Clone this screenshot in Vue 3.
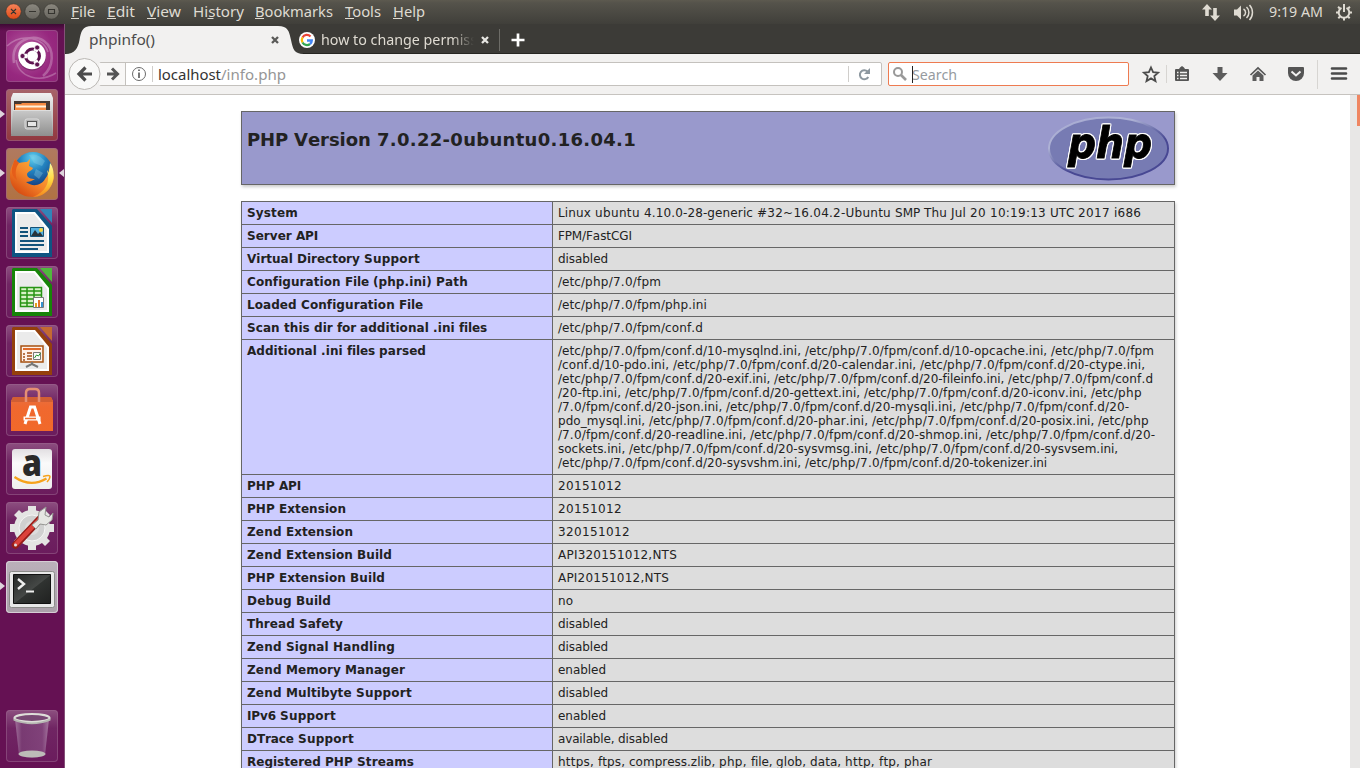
<script setup>
const menus = [
  ['File', 71, 24.5], ['Edit', 107, 28], ['View', 147, 34], ['History', 193, 51],
  ['Bookmarks', 255, 78], ['Tools', 345, 36], ['Help', 393, 32],
]
const rows = [
  ['System', 'Linux ubuntu 4.10.0-28-generic #32~16.04.2-Ubuntu SMP Thu Jul 20 10:19:13 UTC 2017 i686'],
  ['Server API', 'FPM/FastCGI'],
  ['Virtual Directory Support', 'disabled'],
  ['Configuration File (php.ini) Path', '/etc/php/7.0/fpm'],
  ['Loaded Configuration File', '/etc/php/7.0/fpm/php.ini'],
  ['Scan this dir for additional .ini files', '/etc/php/7.0/fpm/conf.d'],
  ['Additional .ini files parsed', `/etc/php/7.0/fpm/conf.d/10-mysqlnd.ini, /etc/php/7.0/fpm/conf.d/10-opcache.ini, /etc/php/7.0/fpm
/conf.d/10-pdo.ini, /etc/php/7.0/fpm/conf.d/20-calendar.ini, /etc/php/7.0/fpm/conf.d/20-ctype.ini,
/etc/php/7.0/fpm/conf.d/20-exif.ini, /etc/php/7.0/fpm/conf.d/20-fileinfo.ini, /etc/php/7.0/fpm/conf.d
/20-ftp.ini, /etc/php/7.0/fpm/conf.d/20-gettext.ini, /etc/php/7.0/fpm/conf.d/20-iconv.ini, /etc/php
/7.0/fpm/conf.d/20-json.ini, /etc/php/7.0/fpm/conf.d/20-mysqli.ini, /etc/php/7.0/fpm/conf.d/20-
pdo_mysql.ini, /etc/php/7.0/fpm/conf.d/20-phar.ini, /etc/php/7.0/fpm/conf.d/20-posix.ini, /etc/php
/7.0/fpm/conf.d/20-readline.ini, /etc/php/7.0/fpm/conf.d/20-shmop.ini, /etc/php/7.0/fpm/conf.d/20-
sockets.ini, /etc/php/7.0/fpm/conf.d/20-sysvmsg.ini, /etc/php/7.0/fpm/conf.d/20-sysvsem.ini,
/etc/php/7.0/fpm/conf.d/20-sysvshm.ini, /etc/php/7.0/fpm/conf.d/20-tokenizer.ini`],
  ['PHP API', '20151012'],
  ['PHP Extension', '20151012'],
  ['Zend Extension', '320151012'],
  ['Zend Extension Build', 'API320151012,NTS'],
  ['PHP Extension Build', 'API20151012,NTS'],
  ['Debug Build', 'no'],
  ['Thread Safety', 'disabled'],
  ['Zend Signal Handling', 'disabled'],
  ['Zend Memory Manager', 'enabled'],
  ['Zend Multibyte Support', 'disabled'],
  ['IPv6 Support', 'enabled'],
  ['DTrace Support', 'available, disabled'],
  ['Registered PHP Streams', 'https, ftps, compress.zlib, php, file, glob, data, http, ftp, phar'],
]

// Spaces each run of text so that its characters advance by whole pixels on average.
const ctx = document.createElement('canvas').getContext('2d')
function runs(text, font) {
  ctx.font = font
  return (text.match(/[^\s/]+[ /\n]?|[\s/]/g) || []).map((t) => {
    const chars = [...t].filter((c) => c !== '\n')
    const extra = chars.reduce((sum, c) => {
      const w = ctx.measureText(c).width
      return sum + Math.round(w) - w
    }, 0)
    return { t, style: { letterSpacing: `${(chars.length ? extra / chars.length : 0).toFixed(4)}px` } }
  })
}
const title = runs('PHP Version 7.0.22-0ubuntu0.16.04.1', 'bold 18px "DejaVu Sans"')
const table = rows.map(([k, v]) => ({
  key: runs(k, 'bold 12px "DejaVu Sans"'),
  val: runs(v, '12px "DejaVu Sans"'),
}))
</script>

<template>
  <div class="desktop">
    <header class="panel">
      <svg class="wm" width="65" height="24" viewBox="0 0 65 24">
        <defs>
          <linearGradient id="wc" x1="0" y1="0" x2="0" y2="1"><stop offset="0" stop-color="#f7845a" /><stop offset="1" stop-color="#df4a16" /></linearGradient>
          <linearGradient id="wb" x1="0" y1="0" x2="0" y2="1"><stop offset="0" stop-color="#8b887f" /><stop offset="1" stop-color="#67655e" /></linearGradient>
        </defs>
        <circle cx="13.5" cy="11.5" r="7.7" fill="url(#wc)" stroke="#35342f" stroke-width=".6" />
        <circle cx="32.5" cy="11.5" r="7.7" fill="url(#wb)" stroke="#35342f" stroke-width=".6" />
        <circle cx="51.5" cy="11.5" r="7.7" fill="url(#wb)" stroke="#35342f" stroke-width=".6" />
        <path d="M11 9l5 5M16 9l-5 5M29 11.5h7M48.5 9.5h6v4h-6z" fill="none" stroke="#35342f" stroke-width="1.1" />
      </svg>
      <svg class="menus" width="400" height="24" viewBox="65 0 400 24">
        <g v-for="m in menus" :key="m[0]">
          <text :x="m[1]" y="17" :textLength="m[2]" lengthAdjust="spacingAndGlyphs">{{ m[0] }}</text>
          <path :d="`M${m[1]} 18.5h${m[0] === 'History' ? 0 : m[0] === 'File' ? 8 : 9}`" stroke="#dfdbd2" />
          <path v-if="m[0] === 'History'" d="M207.5 18.5h6" stroke="#dfdbd2" />
        </g>
      </svg>
      <svg class="status" width="170" height="24" viewBox="1190 0 170 24" fill="#dfdbd2">
        <path d="M1207 4l5 5.500h-3.200V16h-3.600V9.500h-3.200zM1215 21l-5-5.500h3.200V8h3.600v7.500h3.200z" />
        <path d="M1234 9.500h3l4-4v14l-4-4h-3z" />
        <path d="M1243.500 9a4 4 0 010 7M1246.500 7a7.500 7.500 0 010 11M1249.500 5a11 11 0 010 15" fill="none" stroke="#dfdbd2" stroke-width="1.500" />
        <text x="1269" y="17" textLength="54" lengthAdjust="spacingAndGlyphs">9:19 AM</text>
        <g fill="none" stroke="#dfdbd2" stroke-width="2">
          <path d="M1341.500 7.800a5.300 5.300 0 105 0M1344 4v8" />
          <path d="M1339.800 8.500l-1.700-1.700M1348.200 8.500l1.700-1.700M1338.500 12.500h-2.500M1349.500 12.500h2.500M1340 16.500l-1.700 1.700M1348 16.500l1.700 1.700M1344 18v2.500" />
        </g>
      </svg>
    </header>

    <div class="body">
      <nav class="launcher">
        <div class="tile dash"><svg viewBox="0 0 52 52">
          <g fill="none" stroke="#fff" opacity=".25"><path d="M8 33C4 10 27 3 38 11S48 37 37 46" stroke-width="2.500" /><path d="M1 16C16 2 38 8 42 22M10 30C13 48 34 53 50 43" stroke-width="1.500" /></g>
          <circle cx="26" cy="26.500" r="14" fill="#5d1650" opacity=".5" /><circle cx="26" cy="25.500" r="13.800" fill="#fff" />
          <circle cx="26.500" cy="26" r="7" fill="none" stroke="#5e1350" stroke-width="3" />
          <path d="M21 26h-4M29.200 21.300l2-3.500M29.200 30.700l2 3.500" stroke="#fff" stroke-width="4.500" />
          <g fill="#5e1350" stroke="#fff" stroke-width=".7"><circle cx="16.500" cy="26" r="2.500" /><circle cx="31.200" cy="17.500" r="2.500" /><circle cx="31.200" cy="34.500" r="2.500" /></g>
        </svg></div>
        <div class="tile files"><i class="run"></i><svg viewBox="0 0 52 52">
          <defs><linearGradient id="met" x1="0" y1="0" x2="0" y2="1"><stop stop-color="#c9c9c9" /><stop offset="1" stop-color="#8f8f8e" /></linearGradient><linearGradient id="cab" x1="0" y1="0" x2="0" y2="1"><stop stop-color="#f0f0f0" /><stop offset="1" stop-color="#aaa" /></linearGradient></defs>
          <path d="M7 4h38l2 5v36H5V9z" fill="url(#cab)" /><path d="M8 12h36v9H8z" fill="#463932" />
          <path d="M9 15l6 0 1-1h24v8H9z" fill="#f68a41" /><path d="M10 16.500h30v2H10z" fill="#fff1db" />
          <path d="M7 21h38l2 26H5z" fill="url(#met)" /><path d="M7 21.500h38" stroke="#ddd" /><rect x="19" y="30" width="14" height="10" rx="2" fill="#b4b4b4" stroke="#dedede" /><rect x="21.500" y="32.500" width="9" height="5" fill="#e6e6e6" stroke="#555" />
        </svg></div>
        <div class="tile firefox"><i class="run"></i><i class="active"></i><svg viewBox="0 0 52 52">
          <defs><radialGradient id="globe" cx=".5" cy=".15" r=".75"><stop stop-color="#5fd0f0" /><stop offset=".45" stop-color="#2382bf" /><stop offset="1" stop-color="#123c80" /></radialGradient><linearGradient id="fox" x1=".8" y1=".1" x2=".1" y2=".9"><stop stop-color="#ffb53b" /><stop offset=".5" stop-color="#f4842a" /><stop offset="1" stop-color="#d3450f" /></linearGradient><linearGradient id="tail" x1="0" y1="0" x2="0" y2="1"><stop stop-color="#fff79c" /><stop offset=".5" stop-color="#ffd940" /><stop offset="1" stop-color="#f3851d" /></linearGradient></defs>
          <circle cx="27" cy="23.500" r="19.500" fill="url(#globe)" />
          <path d="M23 7c7-2 12 2 16 6l-3 5-8-3zM30 21l7 4-4 6-5-4z" fill="#93cde2" opacity=".35" />
          <path d="M9 11c1 2 3 3 4 4 3-1 6-1 8-1l3-3c0 3-1 5-1 7l4 2c-1 3-5 3-6 6 0 4 4 5 8 5-3 2-6 3-9 3 6 5 15 4 19-3 3-4 4-7 4-11 3 4 5 5 5 10-2 10-10 19-21 19C12 49 3 38 4 26c0-6 3-9 5-15z" fill="url(#fox)" />
          <path d="M44 15c5 6 5 19-1 26-4 5-10 8-16 8 12-5 18-14 14-27l2 3z" fill="url(#tail)" />
          <path d="M9 11l4 4c-4 5-4 12-2 17-7-5-6-12-2-21z" fill="#e65d19" />
        </svg></div>
        <div class="tile office" v-for="kind in ['writer', 'calc', 'impress']" :key="kind" :class="kind"><svg viewBox="0 0 52 52">
          <path d="M7 2h24l15 17v31H6V3z" class="ink" /><path d="M34 2h12v14z" class="ink light" />
          <path d="M9 5h20l14 17v24H9z" fill="#fff" /><path d="M11 7h17l13 16v21H11z" fill="#ebebeb" />
          <template v-if="kind === 'writer'"><path d="M14 21h8M14 25h8M14 29h8M14 34h24M14 38h24M14 42h18" stroke="#13537b" stroke-width="2" /><path d="M24.500 20.500h13v9h-13z" fill="#57b2e0" stroke="#155277" /><path d="M25 29l4-6 3 4 2-2 3 4z" fill="#29333a" /><circle cx="35" cy="23" r="2" fill="#f4d33b" /></template>
          <template v-else-if="kind === 'calc'"><path d="M14.500 21.500h21v19h-21zM14.500 25h21M14.500 29h21M14.500 33h21M14.500 37h21M21 21.500v19M28 21.500v19" fill="#d9f2c7" stroke="#279414" stroke-width="1.500" /><path d="M27.500 31.500h10v10h-10z" fill="#fff" stroke="#777" /><path d="M29 37h2v4h-2z" fill="#e2a21b" /><path d="M32 34h2v7h-2z" fill="#e47227" /><path d="M35 36h2v5h-2z" fill="#3593d0" /></template>
          <template v-else><path d="M15 21h22v16H15z" fill="#fff1e8" stroke="#a6500f" stroke-width="1.500" /><path d="M17 24h18" stroke="#e06a29" stroke-width="2" /><path d="M17 29h2M17 32h2M17 35h2M21 28h5M21 31h5M21 34h5" stroke="#a34c14" stroke-width="1.500" /><path d="M27.500 27.500h7v7h-7z" fill="#f8f8f8" stroke="#777" /><path d="M28.500 33l2-3 2 1 2-3" fill="none" stroke="#24962e" /><path d="M26 37v2l-6 3M26 39l6 3" stroke="#777" stroke-width="2" fill="none" /></template>
        </svg></div>
        <div class="tile"><svg viewBox="0 0 52 52">
          <defs><linearGradient id="bag" x1="0" y1="0" x2="0" y2="1"><stop stop-color="#e8703f" /><stop offset=".3" stop-color="#f0682f" /><stop offset="1" stop-color="#f1692a" /></linearGradient></defs>
          <path d="M7 13h38l2 4v30H5V17z" fill="url(#bag)" /><path d="M7 13h38l2 5H5z" fill="#d15e33" /><path d="M20 18V9q0-4 4-4h5q4 0 4 4v9" fill="none" stroke="#e58f73" stroke-width="2.500" />
          <path d="M19 40L24.500 23h4L34 40" fill="none" stroke="#fff" stroke-width="3" /><path d="M17.500 34.500h17" stroke="#fff" stroke-width="4" /><path d="M19 34.500h11" stroke="#ef7136" stroke-width="1.500" />
        </svg></div>
        <div class="tile"><svg class="amazon" viewBox="0 0 52 52">
          <defs><linearGradient id="az" x1="0" y1="0" x2="0" y2="1"><stop stop-color="#e2dfe2" /><stop offset=".35" stop-color="#fafafa" /><stop offset="1" stop-color="#eee" /></linearGradient></defs>
          <rect x="6" y="6" width="40" height="40" rx="3" fill="url(#az)" /><text x="16" y="33" font-family="Open Sans" font-size="37" font-weight="800" fill="#292929" textLength="20" lengthAdjust="spacingAndGlyphs">a</text>
          <path d="M8.500 34q16 11 32 1.500" fill="none" stroke="#f6a21c" stroke-width="2.200" /><path d="M37 33.500q7-2 7 0t-3 5.500" fill="none" stroke="#f6a21c" stroke-width="1.500" />
        </svg></div>
        <div class="tile"><svg viewBox="0 0 52 52">
          <g fill="#e4e4e3"><circle cx="26" cy="26" r="18" /><path d="M22 4h8v44h-8zM4 22h44v8H4zM8 13l5-5 31 31-5 5zM39 8l5 5-31 31-5-5z" /></g>
          <circle cx="26" cy="26" r="13" fill="#d0d0d0" stroke="#f5f5f5" /><circle cx="26" cy="26" r="7" fill="#ddd" />
          <path d="M9.500 43L34 17" stroke="#961c18" stroke-width="7.500" stroke-linecap="round" /><path d="M10 42L33 18" stroke="#dc423b" stroke-width="4.500" stroke-linecap="round" />
          <path d="M32 18l1-8 7-5-1 8 4 2 4-4-1 7-6 5-6-1-4 5-4-4z" fill="#e6e6e3" stroke="#949491" /><circle cx="9.500" cy="43" r="1.500" fill="#ddd" />
        </svg></div>
        <div class="tile terminal"><i class="run"></i><svg viewBox="0 0 52 52">
          <defs><linearGradient id="term" x1="0" y1="0" x2="1" y2="1"><stop stop-color="#252726" /><stop offset=".5" stop-color="#454846" /><stop offset=".52" stop-color="#303331" /><stop offset="1" stop-color="#202120" /></linearGradient></defs>
          <rect x="3.500" y="10.500" width="45" height="36" rx="2" fill="#e8e8e8" stroke="#8b8b89" /><path d="M7.500 13.500h37v29h-37z" fill="url(#term)" stroke="#111" /><path d="M12 18l6 5-6 5" fill="none" stroke="#eee" stroke-width="2.400" /><path d="M20 30.500h8" stroke="#eee" stroke-width="2" />
        </svg></div>
        <div class="tile trash"><svg viewBox="0 0 52 52">
          <defs><linearGradient id="bin"><stop stop-color="#a97fa5" /><stop offset=".2" stop-color="#7b4076" /><stop offset=".8" stop-color="#84497f" /><stop offset="1" stop-color="#b089ac" /></linearGradient></defs>
          <path d="M9 9h34l-4 36q-13 6-26 0z" fill="url(#bin)" opacity=".8" /><ellipse cx="26" cy="44" rx="13.500" ry="3.500" fill="#bdbdb8" />
          <ellipse cx="26" cy="8" rx="17.500" ry="4" fill="#784873" stroke="#deded9" stroke-width="2.200" /><path d="M7.500 8.500q18.500 8 37 0v2q-18.500 7.500-37 0z" fill="#b6b7b2" />
        </svg></div>
      </nav>

      <main class="browser">
        <svg class="tabs" width="1295" height="30" viewBox="65 24 1295 30">
          <defs><linearGradient id="fade" gradientUnits="userSpaceOnUse" x1="452" x2="474"><stop stop-color="#fff" /><stop offset="1" stop-color="#fff" stop-opacity="0" /></linearGradient><mask id="fm"><path d="M320 24h154v30H320z" fill="url(#fade)" /></mask></defs>
          <path d="M65 53.500h1295" stroke="#262622" />
          <path d="M65 54C75 54 78 48 79.500 40S82 26 92 26H278C288 26 289 31 291 40S294 54 304 54Z" fill="#f2f1f0" />
          <text x="89" y="45" textLength="66" lengthAdjust="spacingAndGlyphs" fill="#4c4c4c">phpinfo()</text>
          <path d="M272 37l6 6M278 37l-6 6" stroke="#5a5a58" stroke-width="2.300" />
          <circle cx="307" cy="40" r="8" fill="#fff" />
          <g fill="none" stroke-width="2.300"><path d="M310.500 36.500a5 5 0 00-8 1" stroke="#ea4335" /><path d="M302.500 37.500a5 5 0 000 5" stroke="#fbbc05" /><path d="M302.500 42.500a5 5 0 007.500 1.500" stroke="#34a853" /><path d="M307 40.500h4.800q0 2-1.800 3.500" stroke="#4285f4" /></g>
          <g mask="url(#fm)"><text x="321" y="45" textLength="156" lengthAdjust="spacingAndGlyphs" fill="#dfdbd2">how to change permiss</text></g>
          <path d="M482 37l6 6M488 37l-6 6" stroke="#e8e7e3" stroke-width="2.300" />
          <path d="M499.500 29v22" stroke="#6d6c67" /><path d="M511.500 40h13M518 33.500v13" stroke="#fff" stroke-width="2.700" />
        </svg>
        <div class="toolbar">
          <div class="urlbar"></div>
          <div class="search"></div>
          <svg class="tools" width="1295" height="41" viewBox="65 54 1295 41">
            <path d="M99 63h26v22H99z" fill="#f8f7f6" /><path d="M125.500 63v22" stroke="#c4c1bd" />
            <circle cx="84.500" cy="74" r="15.500" fill="#f9f9f8" stroke="#bbb8b4" />
            <path d="M92 74H80M85.500 67.500L79 74l6.500 6.500" fill="none" stroke="#4c4c4c" stroke-width="3.200" />
            <path d="M107 74h10M112 68.500l5.500 5.500-5.500 5.500" fill="none" stroke="#555" stroke-width="3" />
            <circle cx="139" cy="74" r="6.500" fill="none" stroke="#6b6b6b" /><path d="M139 72.500V78M139 69.500v1.500" stroke="#555" stroke-width="1.600" />
            <path d="M152.500 66v16M848.500 66v16" stroke="#d0cecb" />
            <text x="158" y="80" textLength="63" lengthAdjust="spacingAndGlyphs" fill="#333">localhost</text><text x="221" y="80" textLength="65" lengthAdjust="spacingAndGlyphs" fill="#969696">/info.php</text>
            <path d="M867.500 71.500a4.500 4.500 0 10.800 5.500" fill="none" stroke="#8d98a0" stroke-width="2" /><path d="M870 68v6h-6z" fill="#8d98a0" />
            <circle cx="898" cy="72" r="4" fill="none" stroke="#999" stroke-width="2" /><path d="M901 75l5 5" stroke="#999" stroke-width="2.700" />
            <text x="912" y="80" textLength="45" lengthAdjust="spacingAndGlyphs" fill="#969b9f">Search</text><path d="M912.500 66v17" stroke="#222" />
            <path d="M1151 67.500l2.100 4.700 5 .5-3.800 3.400 1.200 5-4.500-2.700-4.500 2.700 1.200-5-3.800-3.400 5-.5z" fill="none" stroke="#4c4c4c" stroke-width="1.800" />
            <path d="M1166.500 65v18M1317.500 60v29" stroke="#d7d5d2" />
            <path d="M1175 70q0-1 1-1h3l1-1.500 2-1.500 2 1.500 1 1.500h3q1 0 1 1v10q0 1-1 1h-12q-1 0-1-1z" fill="#555" /><path d="M1177 72.500h1.500M1177 75.500h1.500M1177 78.500h1.500M1180 72.500h7M1180 75.500h7M1180 78.500h7" stroke="#f2f1f0" stroke-width="1.700" />
            <path d="M1217.500 67h5v6h5l-7.500 8-7.500-8h5z" fill="#5c5c5c" />
            <path d="M1250.500 75l7.500-7 7.500 7" fill="none" stroke="#555" stroke-width="1.700" /><path d="M1252.500 75.500l5.500-5 5.500 5v5.500h-4v-4h-3v4h-4z" fill="#5c5c5c" />
            <path d="M1288 68q0-1 1-1h14q1 0 1 1v5a8 8 0 01-16 0z" fill="#555" /><path d="M1291.500 71.500l4.500 4 4.500-4" fill="none" stroke="#f2f1f0" stroke-width="2" />
            <path d="M1332 68.500h14M1332 73.500h14M1332 78.500h14" stroke="#4a4a4a" stroke-width="2.600" stroke-linecap="round" />
          </svg>
        </div>

        <div class="page">
          <div class="content">
            <div class="banner"><h1><span v-for="(w, i) in title" :key="i" :style="w.style">{{ w.t }}</span></h1>
              <svg class="logo" width="121" height="65" viewBox="0 0 121 65">
                <defs><linearGradient id="pe" x1=".1" y1="0" x2=".75" y2="1"><stop stop-color="#aeb2d5" stop-opacity=".8" /><stop offset=".3" stop-color="#aeb2d5" /><stop offset=".5" stop-color="#6b6faa" /><stop offset=".65" stop-color="#484893" /><stop offset="1" stop-color="#484893" /></linearGradient></defs>
                <ellipse cx="60.500" cy="32.500" rx="59.500" ry="31" fill="#777bb3" stroke="url(#pe)" stroke-width="2" />
                <text x="20" y="42" textLength="84" lengthAdjust="spacingAndGlyphs">php</text>
              </svg>
            </div>
            <table>
              <tbody>
                <tr v-for="(r, n) in table" :key="n">
                  <td class="key"><span v-for="(w, i) in r.key" :key="i" :style="w.style">{{ w.t }}</span></td>
                  <td class="val"><span v-for="(w, i) in r.val" :key="i" :style="w.style">{{ w.t }}</span></td>
                </tr>
              </tbody>
            </table>
          </div>
          <div class="scroll"><div class="thumb"></div></div>
        </div>
      </main>
    </div>
  </div>
</template>

<style>
body { margin: 0; overflow: hidden; }
</style>
<style scoped>
.desktop { width: 1360px; height: 768px; display: flex; flex-direction: column; overflow: hidden; font-family: "DejaVu Sans", sans-serif; }
svg { display: block; flex: none; }
.panel { height: 24px; flex: none; display: flex; background: linear-gradient(#5d5a4f, #55534b 12%, #403f3a); }
.status { margin-left: auto; }
.menus text, .status text { font: 14px "Noto Sans", sans-serif; fill: #dfdbd2; }
.body { flex: 1; min-height: 0; display: flex; }
.launcher { box-sizing: border-box; width: 65px; flex: none; padding: 6px 0 6px 6px; display: flex; flex-direction: column; gap: 7px; background: linear-gradient(#3e0a34, transparent 7px), #651153; border-right: 1px solid #845078; }
.tile { position: relative; box-sizing: border-box; width: 52px; height: 52px; flex: none; border-radius: 4px; background: linear-gradient(#8d4f80, #702563 35%, #6b1c5d); box-shadow: inset 0 0 0 1px #9b658f88; }
.tile svg { width: 52px; height: 52px; }
.tile .amazon { overflow: visible; }
.dash { background: radial-gradient(circle at 40% 40%, #b45ca0, #97287f 60%, #8d2377); }
.files { background: linear-gradient(#a76369, #91383f); }
.firefox { background: linear-gradient(#b07a60, #b07243); }
.terminal { background: linear-gradient(#bbb0ba, #aaa0a9); box-shadow: inset 0 0 0 1px #d6cdd5; }
.trash { margin-top: auto; }
.run, .active { position: absolute; top: 21px; border: 4.500px solid transparent; }
.run { left: -6px; border-left: 5px solid #ded4dc; border-right: 0; }
.active { right: -6px; border-right: 5px solid #ded4dc; border-left: 0; }
.writer .ink { fill: #0f5482; }
.calc .ink { fill: #178409; }
.impress .ink { fill: #94400c; }
.writer .light { fill: #3185b8; }
.calc .light { fill: #50b83d; }
.impress .light { fill: #c46a32; }
.browser { flex: 1; min-width: 0; display: flex; flex-direction: column; }
.tabs { background: #3c3b37; }
.tabs text, .tools text { font: 14px "Noto Sans", sans-serif; }
.toolbar { position: relative; box-sizing: border-box; height: 41px; flex: none; display: flex; gap: 6px; padding: 8px 0 0 34px; background: #f2f1f0; border-bottom: 1px solid #c6c3bf; }
.urlbar, .search { box-sizing: border-box; height: 24px; background: #fff; border: 1px solid #c4c1bd; border-radius: 2px; }
.urlbar { width: 783px; }
.search { width: 241px; border-color: #ee7b51; }
.tools { position: absolute; left: 0; top: 0; }
.page { flex: 1; min-height: 0; display: flex; background: #fff; overflow: hidden; }
.content { width: 934px; flex: none; margin: 16px 175px 0 176px; color: #222; font-kerning: none; font-variant-ligatures: none; }
.banner { box-sizing: border-box; height: 74px; display: flex; justify-content: space-between; padding: 4px 5px; background: #9999cc; border: 1px solid #666; box-shadow: 1px 2px 3px #ccc; }
.logo text { font: italic bold 43px "DejaVu Sans", sans-serif; fill: #000; stroke: #000; stroke-width: .9; filter: drop-shadow(1px 0 0 #fff) drop-shadow(-1px 0 0 #fff) drop-shadow(0 1px 0 #fff) drop-shadow(0 -1px 0 #fff); }
h1 { margin: 13px 0 0; font-size: 18px; line-height: 21px; white-space: pre; }
table { margin-top: 16px; width: 934px; table-layout: fixed; border-collapse: collapse; box-shadow: 1px 2px 3px #ccc; font-size: 12px; line-height: 14px; }
td { border: 1px solid #666; padding: 4px 5px; vertical-align: top; white-space: pre; }
.key { width: 300px; background: #ccccff; font-weight: bold; }
.val { background: #dddddd; }
.scroll { width: 10px; flex: none; background: #e8e7e6; }
.thumb { width: 3px; height: 31px; margin-left: auto; background: #ef8662; }
</style>
